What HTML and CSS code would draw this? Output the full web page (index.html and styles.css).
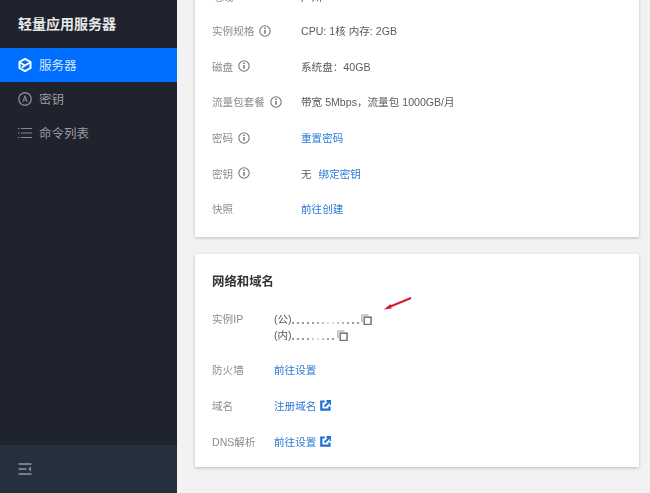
FILE: index.html
```html
<!DOCTYPE html>
<html lang="zh-CN">
<head>
<meta charset="utf-8">
<title>轻量应用服务器</title>
<link rel="stylesheet" href="styles.css">
</head>
<body>
<div class="app">
  <aside class="sidebar">
    <div class="brand">轻量应用服务器</div>
    <nav class="nav">
      <a class="nav-item active">
        <svg class="nav-icon" viewBox="0 0 14 14"><path d="M7 .8 12.5 4V10L7 13.2 1.5 10V4Z" fill="none" stroke="#fff" stroke-width="2"/><path d="M1.8 4.6 7 7.6l5.2-3M3.8 9.4 7 7.6" fill="none" stroke="#fff" stroke-width="1.7"/></svg>
        <span>服务器</span>
      </a>
      <a class="nav-item">
        <svg class="nav-icon" viewBox="0 0 14 14"><circle cx="7" cy="7" r="6.2" fill="none" stroke="#85878d" stroke-width="1.4"/><path d="M7 3.6 4.8 9.8M7 3.6l2.2 6.2M5.2 8h3.6" fill="none" stroke="#85878d" stroke-width="1.1"/></svg>
        <span>密钥</span>
      </a>
      <a class="nav-item">
        <svg class="nav-icon" viewBox="0 0 14 14"><path d="M0 2.5h1.6M3 2.5h11M0 7h1.6M3 7h11M0 11.5h1.6M3 11.5h11" fill="none" stroke="#85878d" stroke-width="1.1"/></svg>
        <span>命令列表</span>
      </a>
    </nav>
    <div class="collapse">
      <svg class="collapse-icon" viewBox="0 0 14 12"><path d="M.5 1h13M.5 6h8M.5 11h13" fill="none" stroke="#8f98a5" stroke-width="1.5"/><path d="M13 3.5v5L10.5 6Z" fill="#8f98a5"/></svg>
    </div>
  </aside>
  <main class="main">
    <section class="card card-spec">
      <div class="row row-clipped"><div class="label">地域</div><div class="value">广州</div></div>
      <div class="row"><div class="label">实例规格<svg class="info" viewBox="0 0 12 12"><use href="#i"/></svg></div><div class="value">CPU: 1核 内存: 2GB</div></div>
      <div class="row"><div class="label">磁盘<svg class="info" viewBox="0 0 12 12"><use href="#i"/></svg></div><div class="value">系统盘：40GB</div></div>
      <div class="row"><div class="label">流量包套餐<svg class="info" viewBox="0 0 12 12"><use href="#i"/></svg></div><div class="value">带宽 5Mbps，流量包 1000GB/月</div></div>
      <div class="row"><div class="label">密码<svg class="info" viewBox="0 0 12 12"><use href="#i"/></svg></div><div class="value"><a class="link">重置密码</a></div></div>
      <div class="row"><div class="label">密钥<svg class="info" viewBox="0 0 12 12"><use href="#i"/></svg></div><div class="value">无<a class="link link-gap">绑定密钥</a></div></div>
      <div class="row"><div class="label">快照</div><div class="value"><a class="link">前往创建</a></div></div>
    </section>
    <section class="card card-net">
      <h2 class="card-title">网络和域名</h2>
      <div class="row row-ip">
        <div class="label">实例IP</div>
        <div class="value">
          <div class="ip-line">(公)<span class="mask mask-long"></span><svg class="copy" viewBox="0 0 12 12"><use href="#c"/></svg></div>
          <div class="ip-line">(内)<span class="mask mask-short"></span><svg class="copy" viewBox="0 0 12 12"><use href="#c"/></svg></div>
        </div>
      </div>
      <div class="row"><div class="label">防火墙</div><div class="value"><a class="link">前往设置</a></div></div>
      <div class="row"><div class="label">域名</div><div class="value"><a class="link">注册域名</a><svg class="ext" viewBox="0 0 11 11"><use href="#e"/></svg></div></div>
      <div class="row"><div class="label">DNS解析</div><div class="value"><a class="link">前往设置</a><svg class="ext" viewBox="0 0 11 11"><use href="#e"/></svg></div></div>
    </section>
  </main>
  <svg class="arrow" viewBox="0 0 28 14"><path d="M27 1 4 10.5" stroke="#d9182a" stroke-width="1.9" fill="none"/><path d="M0 12.5 6.5 7 7.5 11.5Z" fill="#d9182a"/></svg>
</div>
<svg class="defs" aria-hidden="true">
  <defs>
    <g id="i"><circle cx="6" cy="6" r="5.2" fill="none" stroke="#777" stroke-width="1.1"/><path d="M6 5v3.8" stroke="#666" stroke-width="1.4"/><path d="M6 2.6v1.4" stroke="#666" stroke-width="1.4"/></g>
    <g id="c"><path d="M1 9V1h7" fill="none" stroke="#999" stroke-width="1.1"/><rect x="3.5" y="3.5" width="7.5" height="8" fill="none" stroke="#777" stroke-width="1.7"/></g>
    <g id="e"><path d="M9.5 6.5v3.2H1.3V1.5h3.4" fill="none" stroke="#1f6fd6" stroke-width="2.2"/><path d="M4.5 6.5 9 2M6.5 1h4v4" fill="none" stroke="#1f6fd6" stroke-width="1.8"/></g>
  </defs>
</svg>
</body>
</html>
```

FILE: styles.css
```css
* { box-sizing: border-box; }
html, body { margin: 0; height: 100%; overflow: hidden; }
body {
  font-family: "Liberation Sans", "Noto Sans CJK SC", sans-serif;
  font-size: 10.6px;
  color: #555;
  background: #f2f2f2;
}
.app { position: relative; display: flex; width: 650px; height: 493px; overflow: hidden; filter: blur(.35px); }
.defs { width: 0; height: 0; position: absolute; }

.sidebar { width: 177px; flex: none; display: flex; flex-direction: column; background: #1f232e; }
.brand { height: 48px; padding: 16px 0 0 18px; font-size: 14px; line-height: 16px; font-weight: 700; color: #e8e8e8; }
.nav { flex: 1; }
.nav-item { display: flex; align-items: center; gap: 7px; height: 34px; padding: 0 0 2px 18px; font-size: 12.5px; color: #9a9ca1; }
.nav-item.active { background: #006eff; color: #d7e8ff; }
.nav-icon { width: 14px; height: 14px; flex: none; margin-top: 1px; }
.collapse { height: 48px; display: flex; align-items: center; padding-left: 18px; background: #262f3e; }
.collapse-icon { width: 14px; height: 12px; }

.main { flex: 1; padding: 0 11px 0 18px; }
.card { background: #fff; box-shadow: 0 1px 3px rgba(0,0,0,.22); }
.card-spec { margin-top: -23px; height: 260px; padding: 0 17px; display: flex; flex-direction: column; }
.card-spec .label { width: 89px; }
.card-net { margin-top: 17px; height: 213px; padding: 0 17px; }
.card-net .label { width: 62px; }
.card-title { margin: 0; padding-top: 20px; height: 57px; font-size: 12.4px; line-height: 16px; font-weight: 700; color: #333; }

.row { display: flex; align-items: center; height: 35.7px; flex: none; }
.row-clipped { padding-top: 4px; }
.row-ip { height: 41px; align-items: flex-start; }
.label { flex: none; display: flex; align-items: center; gap: 5px; color: #8c8c8c; }
.value { display: flex; align-items: center; color: #5c5c5c; }
.row-ip .value { display: block; }
.row-ip .label { line-height: 16px; }
.ip-line { display: flex; align-items: center; height: 16px; line-height: 16px; }
.link { color: #2a7ad6; }
.link-gap { margin-left: 7px; }
.info { width: 12px; height: 12px; flex: none; }
.copy { width: 11px; height: 11px; margin-left: 1px; }
.ext { width: 11px; height: 11px; margin-left: 4px; }
.mask { display: block; height: 2px; margin-top: 7px; background: linear-gradient(90deg, transparent 35%, rgba(255,255,255,.75) 55%, transparent 85%), repeating-linear-gradient(90deg, #9a9a9a 0 2px, transparent 2px 5px); filter: blur(.5px); }
.mask-long { width: 68px; }
.mask-short { width: 44px; }
.arrow { position: absolute; left: 384px; top: 297px; width: 28px; height: 14px; }
```
